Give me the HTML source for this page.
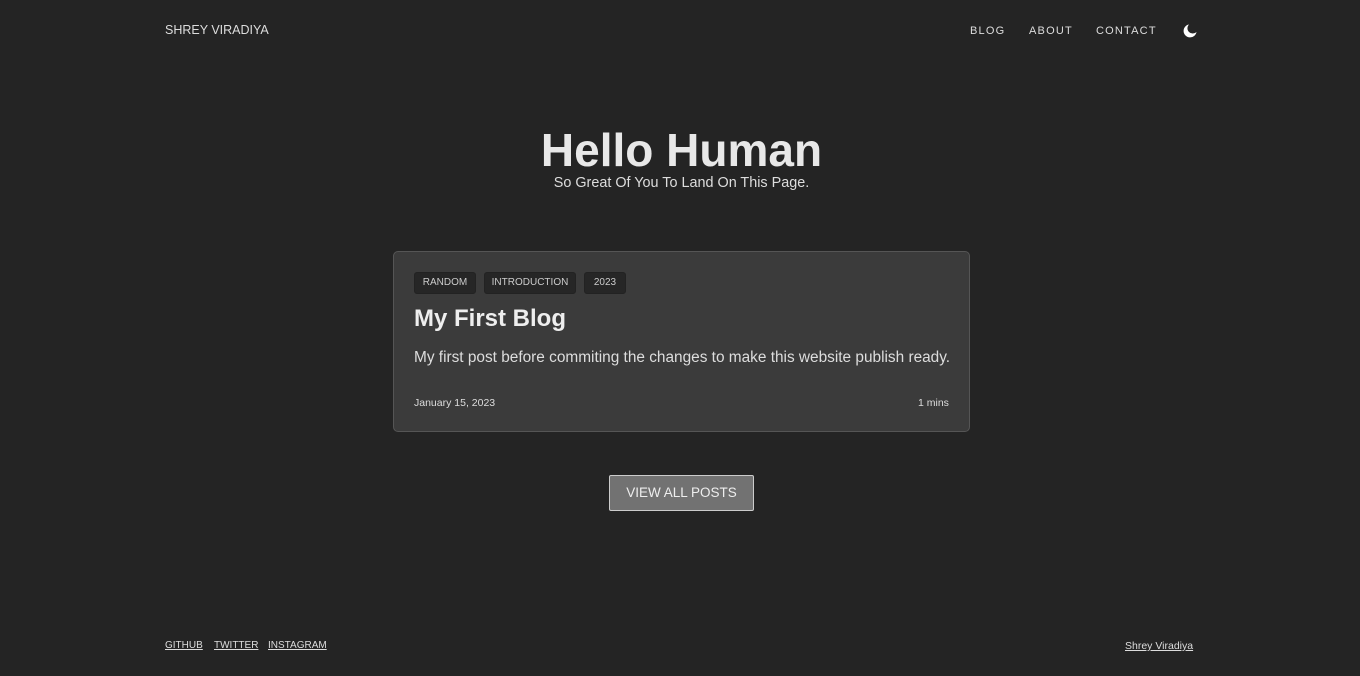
<!DOCTYPE html>
<html><head><meta charset="utf-8"><style>
*{margin:0;padding:0;box-sizing:border-box}
body{width:1360px;height:676px;background:#242424;color:#e5e5e5;font-family:"Liberation Sans",sans-serif;position:relative;overflow:hidden}
.a{position:absolute;white-space:nowrap}
.nav{font-size:11px;letter-spacing:1.2px;color:#ddd;top:25px}
.tag{position:absolute;top:272px;height:22px;background:#262626;border:1px solid #222;border-radius:3px;font-size:10px;color:#ccc;line-height:20px;text-align:center}
.f{font-size:10px;text-decoration:underline;color:#ddd;top:640px}
</style></head><body>
<div class="a" style="left:165px;top:23px;font-size:12.5px;color:#ddd">SHREY VIRADIYA</div>
<div class="a nav" style="left:970px">BLOG</div>
<div class="a nav" style="left:1029px">ABOUT</div>
<div class="a nav" style="left:1096px">CONTACT</div>
<svg class="a" style="left:1182px;top:23px" width="16" height="16" viewBox="0 0 16 16"><path d="M7 1.5A6.5 6.5 0 1 0 14.5 9 5 5 0 0 1 7 1.5z" fill="#fff"/></svg>
<div class="a" style="left:0;width:1363px;text-align:center;top:123px;font-size:46px;font-weight:bold;color:#e8e8e8">Hello Human</div>
<div class="a" style="left:0;width:1363px;text-align:center;top:175px;font-size:14.4px;color:#ddd">So Great Of You To Land On This Page.</div>
<div class="a" style="left:393px;top:251px;width:577px;height:181px;background:#3b3b3b;border:1px solid #555;border-radius:5px"></div>
<div class="tag" style="left:414px;width:62px">RANDOM</div>
<div class="tag" style="left:484px;width:92px">INTRODUCTION</div>
<div class="tag" style="left:584px;width:42px">2023</div>
<div class="a" style="left:414px;top:305px;font-size:24px;font-weight:bold;color:#eee">My First Blog</div>
<div class="a" style="left:414px;top:349px;font-size:15.4px;color:#ddd">My first post before commiting the changes to make this website publish ready.</div>
<div class="a" style="left:414px;top:397px;font-size:10.5px;color:#ddd">January 15, 2023</div>
<div class="a" style="left:918px;top:397px;font-size:10.5px;color:#ddd">1 mins</div>
<div class="a" style="left:609px;top:475px;width:145px;height:36px;background:#727272;border:1px solid #ccc;border-radius:2px;text-align:center;line-height:34px;font-size:13.5px;color:#eee">VIEW ALL POSTS</div>
<div class="a f" style="left:165px">GITHUB</div>
<div class="a f" style="left:214px">TWITTER</div>
<div class="a f" style="left:268px">INSTAGRAM</div>
<div class="a f" style="left:1125px;font-size:10.5px">Shrey Viradiya</div>
</body></html>
